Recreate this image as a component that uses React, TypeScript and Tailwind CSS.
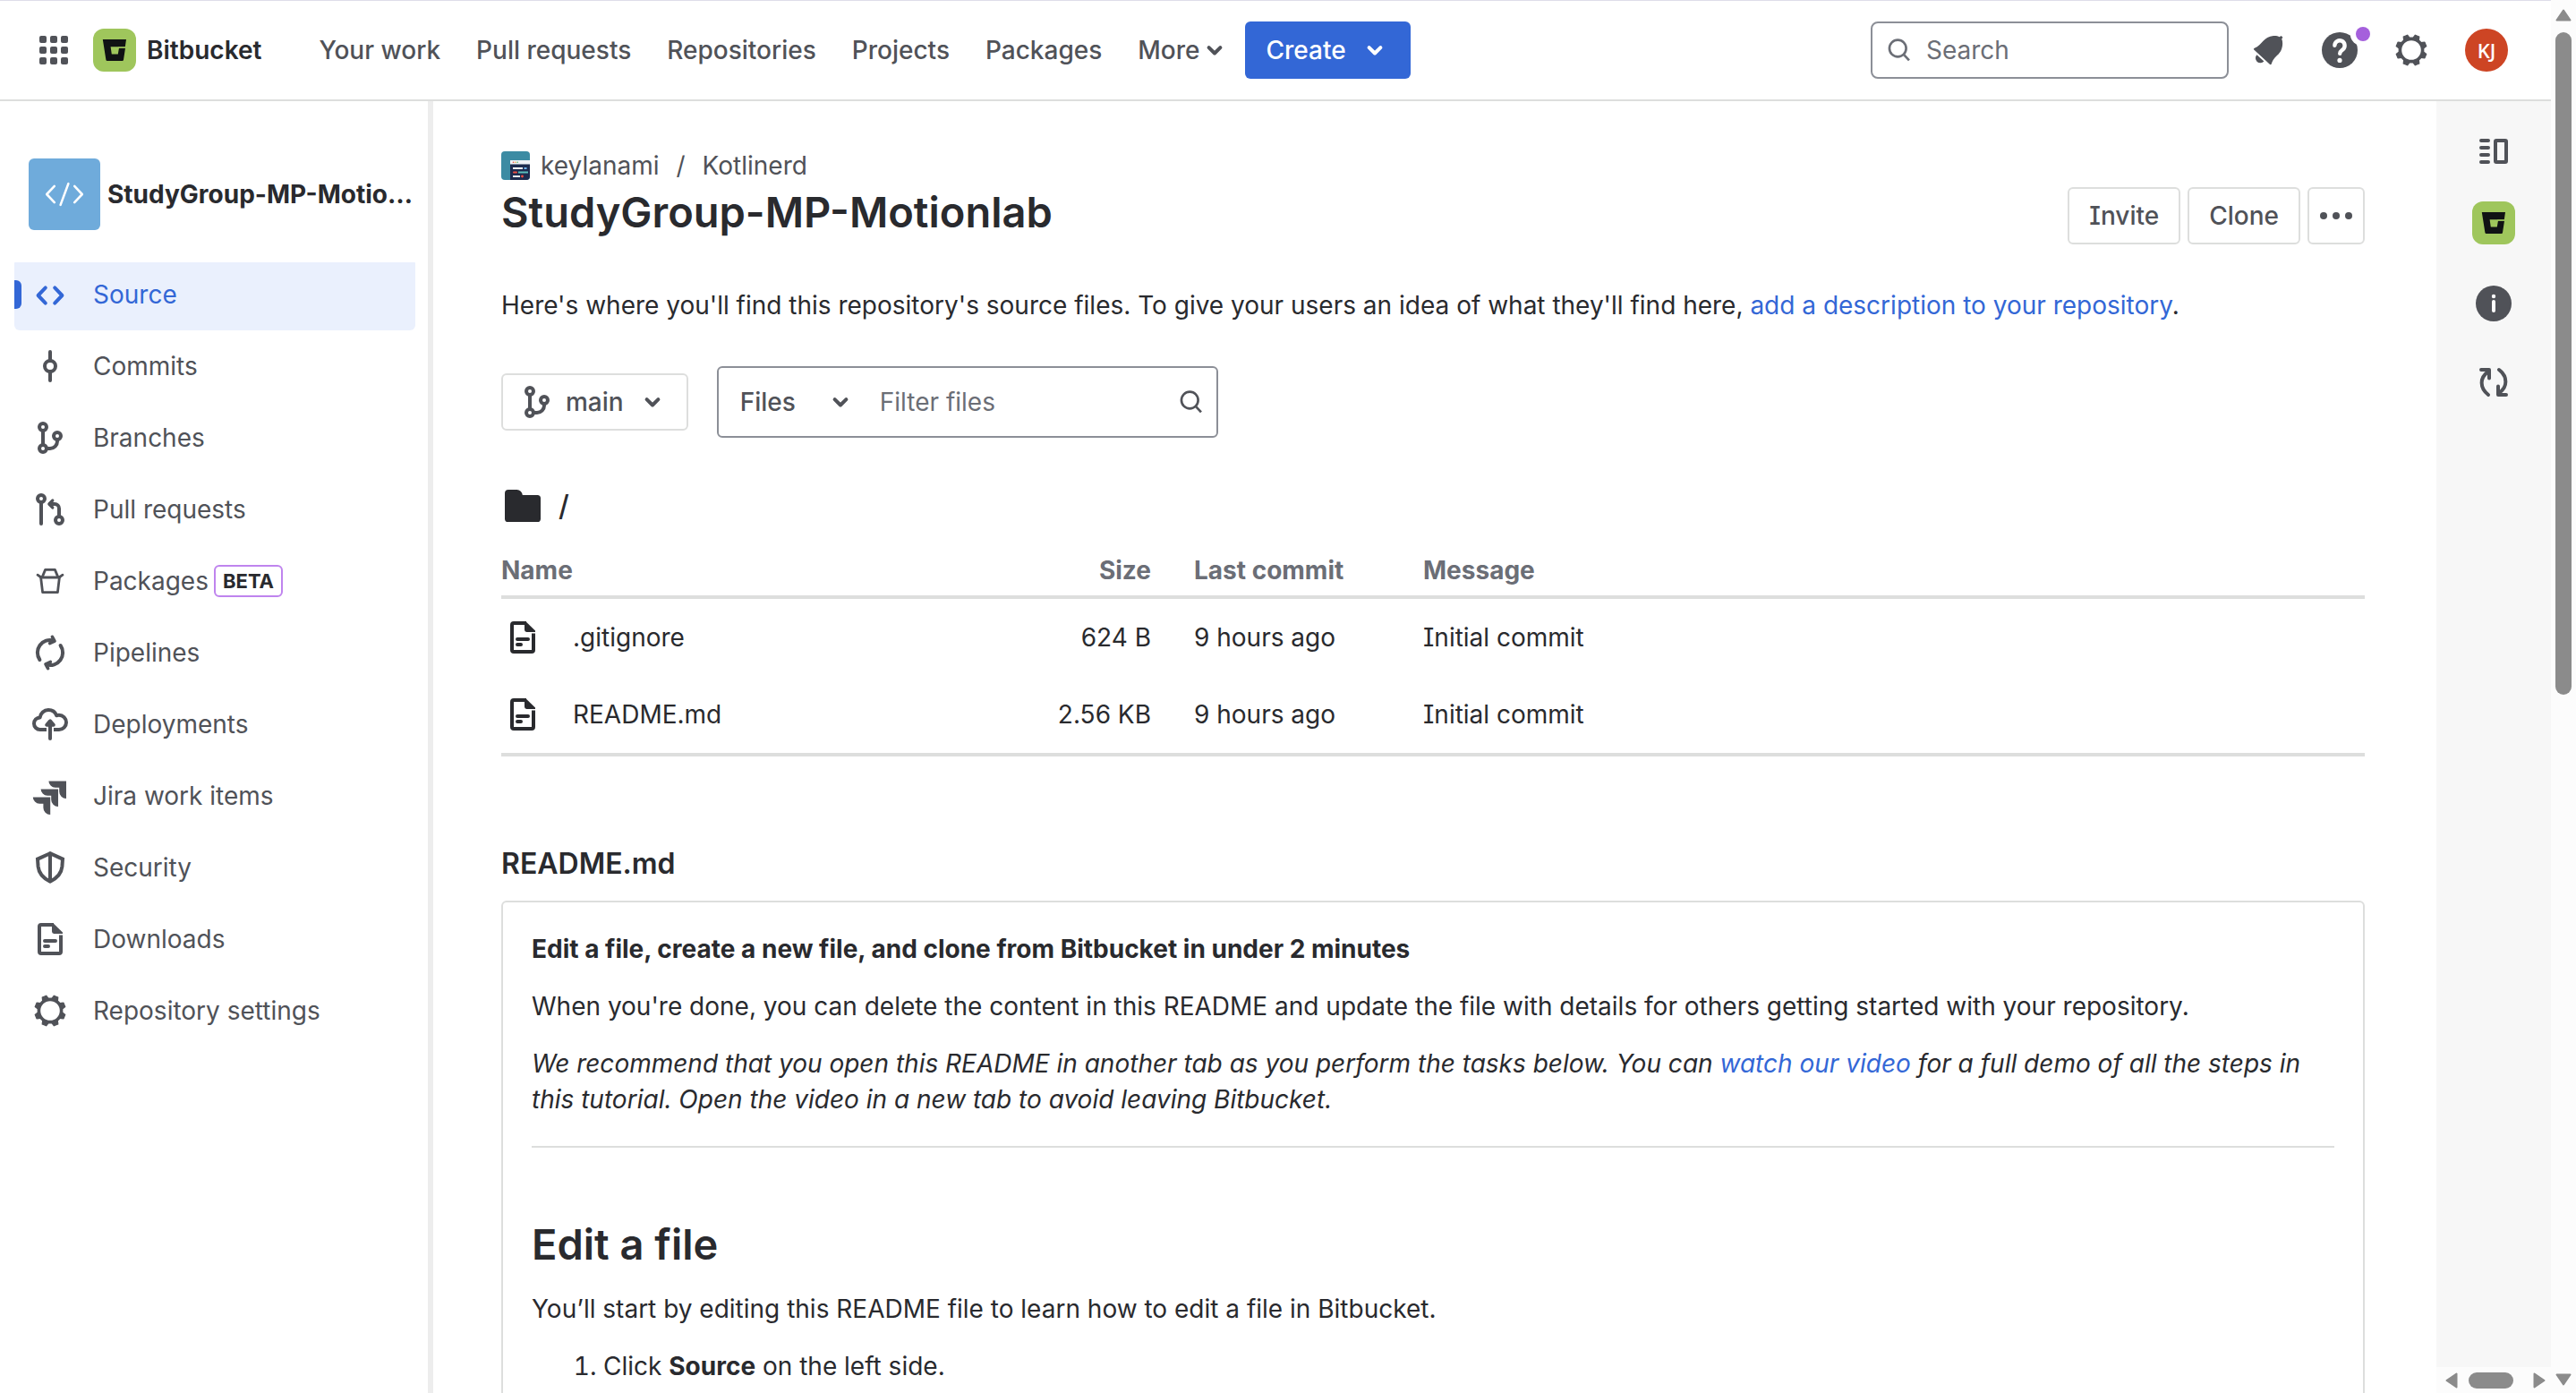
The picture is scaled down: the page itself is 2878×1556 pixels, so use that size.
import React from "react";

type IconProps = { className?: string; children?: React.ReactNode };

function Icon({ className = "size-12", children }: IconProps) {
  return (
    <svg
      viewBox="0 0 24 24"
      className={`shrink-0 ${className}`}
      fill="none"
      stroke="currentColor"
      strokeWidth={2}
      strokeLinecap="round"
      strokeLinejoin="round"
      aria-hidden="true"
    >
      {children}
    </svg>
  );
}

const CodeIcon = () => (
  <Icon>
    <path d="M9.4 8.2 5.3 12.5l4.1 4.3M14.6 8.2l4.1 4.3-4.1 4.3" />
  </Icon>
);
const CommitIcon = () => (
  <Icon>
    <circle cx="12" cy="12" r="3" />
    <path d="M12 4v5M12 15v5" />
  </Icon>
);
const BranchIcon = () => (
  <Icon>
    <circle cx="8" cy="6" r="2" />
    <circle cx="8" cy="18" r="2" />
    <circle cx="16" cy="11" r="2" />
    <path d="M8 8v8M16 13v1a4 4 0 0 1-4 4h-2" />
  </Icon>
);
const PullRequestIcon = () => (
  <Icon>
    <circle cx="7" cy="6" r="2" />
    <circle cx="17" cy="18" r="2" />
    <path d="M7 8v12M17 16v-4.5A2.5 2.5 0 0 0 14.5 9H12" />
    <path d="M13.4 7 11.4 9l2 2" strokeWidth={1.6} />
  </Icon>
);
const BucketIcon = () => (
  <Icon>
    <g strokeWidth={1.4}>
      <path d="M5 8.6 7 10h10l2-1.4" />
      <path d="M7.6 9.8 9.3 5.7h5.4l1.7 4.1" />
      <path d="m6.8 10 1 8.3h8.4l1-8.3" />
    </g>
  </Icon>
);
const PipelinesIcon = () => (
  <Icon>
    <path d="M6.2 16A7 7 0 0 1 14 5.3" />
    <path d="M13.2 3.2 14.5 5.6 11.8 6.8" strokeWidth={1.8} />
    <path d="M17.8 8A7 7 0 0 1 10 18.7" />
    <path d="M10.8 20.8 9.5 18.4 12.2 17.2" strokeWidth={1.8} />
  </Icon>
);
const DeployIcon = () => (
  <Icon>
    <path
      strokeLinecap="butt"
      d="M10 15H6.4A3.4 3.4 0 0 1 3 11.6a3.4 3.4 0 0 1 3.3-3.4C6.6 5.8 8.6 4 11 4c2.1 0 3.9 1.3 4.6 3.1.4-.1.9-.2 1.3-.2A4.1 4.1 0 0 1 21 11a4 4 0 0 1-4 4h-3"
    />
    <path d="M12 11v9" />
    <path d="M12 10.2 10.1 12.4h3.8z" fill="currentColor" />
  </Icon>
);
const JiraIcon = () => (
  <Icon>
    <g fill="currentColor" stroke="none">
      <path d="M11.2 3.7H21v9.8a3.9 3.9 0 0 1-3.9-3.9V7.4h-2.2a3.8 3.8 0 0 1-3.7-3.7z" />
      <path d="M6.8 8.2h9.7V18a3.9 3.9 0 0 1-3.9-3.9v-2.2h-2.1a3.8 3.8 0 0 1-3.7-3.7z" />
      <path d="M2.4 12.7h9.7v9.8a3.9 3.9 0 0 1-3.9-3.9v-2.2H6.1a3.8 3.8 0 0 1-3.7-3.7z" />
    </g>
  </Icon>
);
const ShieldIcon = () => (
  <Icon>
    <path
      strokeLinejoin="miter"
      d="M12 4.1 5 7.3l.3 4.2c.4 3.7 2.2 6.2 6.7 8.3 4.5-2.1 6.3-4.6 6.7-8.3L19 7.3zM12 4v15.8"
    />
  </Icon>
);
const FileIcon = () => (
  <Icon>
    <path
      strokeLinecap="butt"
      d="M14 4H7a1 1 0 0 0-1 1v14a1 1 0 0 0 1 1h10a1 1 0 0 0 1-1V9.8"
    />
    <path
      d="M13 3h.6L19 8.2V9h-4.8A1.2 1.2 0 0 1 13 7.8z"
      fill="currentColor"
      stroke="none"
    />
    <path d="M9 13h6M9 16h2" />
  </Icon>
);
const GearIcon = () => (
  <Icon>
    <circle cx="12" cy="12" r="6.3" strokeWidth={1.8} />
    {[22.5, 67.5, 112.5, 157.5, 202.5, 247.5, 292.5, 337.5].map((a) => (
      <path
        key={a}
        d="M10.2 5.5 10.8 3.4h2.4l.6 2.1z"
        fill="currentColor"
        strokeWidth={0.6}
        transform={`rotate(${a} 12 12)`}
      />
    ))}
  </Icon>
);
const FolderIcon = () => (
  <Icon>
    <path
      fill="currentColor"
      stroke="none"
      d="M4 3h4.6a3.2 3.2 0 0 1 3.3 3h8.3A1.8 1.8 0 0 1 22 7.8v11.4a1.8 1.8 0 0 1-1.8 1.8H3.8A1.8 1.8 0 0 1 2 19.2V5a2 2 0 0 1 2-2z"
    />
  </Icon>
);
const ChevronIcon = () => (
  <Icon className="size-8">
    <path strokeWidth={3} d="m7.2 9.8 4.8 4.8 4.8-4.8" />
  </Icon>
);
const SearchIcon = () => (
  <Icon className="size-8">
    <circle cx="10.7" cy="10.5" r="7" />
    <path d="m16 16 4.2 4.5" strokeLinecap="butt" />
  </Icon>
);
const GridIcon = () => (
  <Icon className="size-8">
    <g fill="currentColor" stroke="none">
      {[0, 9, 18].map((y) =>
        [0, 9, 18].map((x) => (
          <rect key={`${x}-${y}`} x={x} y={y} width="6" height="6" rx="1.5" />
        )),
      )}
    </g>
  </Icon>
);
const BellIcon = () => (
  <Icon>
    <g fill="currentColor" stroke="none">
      <path d="M4.4 10.9C8.8 9.2 9.5 4.3 15 4c1.3-.1 2.5.1 3.4.6l.9-.6.9.9-.6.9c.5 1 .6 2.5.3 4.2-.9 5-4.6 5-6 9.6-.1.5-.6.6-1 .3l-8.800-8.100c-.3-.3-.2-.7.3-.9z" />
      <path d="m5.7 14.6 4 3.7a2.7 2.7 0 0 1-4-3.7z" />
    </g>
  </Icon>
);
const HelpIcon = () => (
  <Icon>
    <circle cx="12" cy="12" r="10" fill="currentColor" stroke="none" />
    <circle cx="24.5" cy="3" r="6.6" fill="white" stroke="none" />
    <path
      stroke="white"
      strokeWidth={2.2}
      d="M9.2 9.4a2.8 2.8 0 1 1 4.6 2.2c-1 .8-1.7 1.2-1.7 2.3"
    />
    <circle cx="12" cy="17.7" r="1.3" fill="white" stroke="none" />
  </Icon>
);
const InfoIcon = () => (
  <Icon>
    <circle cx="12" cy="12" r="10" fill="currentColor" stroke="none" />
    <circle cx="12" cy="8" r="1.1" fill="white" stroke="none" />
    <path stroke="white" d="M12 11v5" />
  </Icon>
);
const PanelIcon = () => (
  <Icon>
    <path d="M5 6h4M5 10h4M5 14h4M5 18h4" />
    <rect x="13" y="6" width="6" height="12" rx=".5" />
  </Icon>
);
const SyncIcon = () => (
  <Icon>
    <path d="M9 19C4.2 15.3 4 9.5 9 6M5 5h4.5v4.8" />
    <path d="M15 5c4.8 3.7 5 9.5 0 13M19 19h-4.5v-4.8" />
  </Icon>
);
const DotsIcon = () => (
  <Icon>
    <g fill="currentColor" stroke="none">
      <circle cx="5" cy="12" r="2" />
      <circle cx="12" cy="12" r="2" />
      <circle cx="19" cy="12" r="2" />
    </g>
  </Icon>
);
const BitbucketLogo = () => (
  <svg viewBox="0 0 24 24" className="size-12 shrink-0" aria-hidden="true">
    <rect width="24" height="24" rx="6" fill="#9fc65c" />
    <path
      fill="#101214"
      d="M5.4 6h13.1l-.6 4.3h-3.8l-.1.6h4l-1 6.5a.7.7 0 0 1-.7.6H7.9a.7.7 0 0 1-.7-.6z"
    />
    <path fill="#9fc65c" d="M9.8 10.1h8.4l-.1.700h-3.600l-.6 3.400h-3.500z" />
  </svg>
);

const navLinks = ["Your work", "Pull requests", "Repositories", "Projects", "Packages"];

function Header() {
  return (
    <header className="flex h-[113px] shrink-0 items-center border-t border-b-2 border-t-[#dedde9] border-b-[#dddedd] pr-12 pl-11 text-[#505258]">
      <button type="button" aria-label="Switch to" className="mr-7">
        <GridIcon />
      </button>
      <a href="#home" className="mr-16 flex items-center gap-3 font-semibold text-[#292a2e]">
        <BitbucketLogo />
        Bitbucket
      </a>
      <nav className="flex items-center gap-10 font-medium">
        {navLinks.map((label) => (
          <a key={label} href="#nav">
            {label}
          </a>
        ))}
        <button type="button" className="flex items-center">
          More
          <ChevronIcon />
        </button>
      </nav>
      <button
        type="button"
        className="ml-[18px] flex h-16 items-center gap-4 rounded-md bg-[#3367d6] px-6 font-medium text-white"
      >
        Create
        <ChevronIcon />
      </button>
      <label className="ml-auto flex h-16 w-[400px] items-center gap-3.5 rounded-lg border-2 border-[#8c8f97] px-3.5 text-[#6b6e76]">
        <SearchIcon />
        <input
          type="search"
          aria-label="Search"
          placeholder="Search"
          className="w-full min-w-0 bg-transparent outline-none placeholder:text-[#6b6e76]"
        />
      </label>
      <div className="ml-5 flex items-center gap-8">
        <button type="button" aria-label="Announcements">
          <BellIcon />
        </button>
        <button type="button" aria-label="Help" className="relative">
          <HelpIcon />
          <span className="absolute -top-0.5 left-[42px] size-4 rounded-full bg-[#a560dc]" />
        </button>
        <button type="button" aria-label="Settings">
          <GearIcon />
        </button>
      </div>
      <button
        type="button"
        aria-label="Your profile"
        className="ml-9 size-12 shrink-0 rounded-full bg-[#cd4524] font-['Open_Sans',sans-serif] text-[22px] font-semibold text-white"
      >
        KJ
      </button>
    </header>
  );
}

const sideItems: { label: string; icon: React.ReactNode; beta?: boolean }[] = [
  { label: "Source", icon: <CodeIcon /> },
  { label: "Commits", icon: <CommitIcon /> },
  { label: "Branches", icon: <BranchIcon /> },
  { label: "Pull requests", icon: <PullRequestIcon /> },
  { label: "Packages", icon: <BucketIcon />, beta: true },
  { label: "Pipelines", icon: <PipelinesIcon /> },
  { label: "Deployments", icon: <DeployIcon /> },
  { label: "Jira work items", icon: <JiraIcon /> },
  { label: "Security", icon: <ShieldIcon /> },
  { label: "Downloads", icon: <FileIcon /> },
  { label: "Repository settings", icon: <GearIcon /> },
];

function Sidebar() {
  return (
    <aside className="w-[484px] shrink-0 border-r-[6px] border-[#ededed] pt-16 text-[#505258]">
      <div className="flex items-center gap-2 pr-4 pl-8 font-[653] text-[#292a2e]">
        <span className="flex size-20 shrink-0 items-center justify-center rounded-md bg-[#6fabdb] text-white">
          <Icon className="size-11">
            <path
              strokeWidth={1.4}
              d="M5.9 7 1.2 12l4.7 5M18.1 7l4.7 5-4.7 5M14.4 5.5l-4.8 13"
            />
          </Icon>
        </span>
        <span className="truncate">StudyGroup-MP-Motionlab</span>
      </div>
      <nav className="mt-9 overflow-hidden pr-3.5 pl-4">
        <ul className="-mt-1">
          {sideItems.map((item, i) => (
            <li key={item.label}>
              <a
                href="#section"
                aria-current={i === 0 ? "page" : undefined}
                className="relative flex h-20 items-center gap-6 overflow-hidden rounded-md pl-4 aria-[current=page]:bg-[#eaf0fd] aria-[current=page]:text-[#3367d6]"
              >
                {i === 0 && (
                  <span className="absolute top-6 left-0 h-8 w-2 rounded-r-md bg-[#3367d6]" />
                )}
                {item.icon}
                <span className="flex items-center gap-1.5">
                  {item.label}
                  {item.beta && (
                    <span className="rounded-md border-2 border-[#bf84ee] px-2 text-[22px] leading-8 font-[653] text-[#292a2e]">
                      BETA
                    </span>
                  )}
                </span>
              </a>
            </li>
          ))}
        </ul>
      </nav>
    </aside>
  );
}

function WorkspaceAvatar() {
  return (
    <svg viewBox="0 0 32 32" className="size-8 shrink-0 rounded" aria-hidden="true">
      <rect width="32" height="32" fill="#3c8ba3" />
      <rect x="10" y="10" width="22" height="22" fill="#1d2b4f" />
      <rect x="10" y="10" width="22" height="4.5" fill="#eef1f6" />
      <circle cx="13.5" cy="12.3" r=".8" fill="#e5483a" />
      <circle cx="15.8" cy="12.3" r=".8" fill="#f0a030" />
      <circle cx="18.1" cy="12.3" r=".8" fill="#4bae5f" />
      <rect x="13" y="18" width="11" height="2" fill="#fff" />
      <rect x="25.5" y="18" width="3" height="2" fill="#6fb3f2" />
      <rect x="13" y="22.5" width="5" height="2" rx="1" fill="#ef4f43" />
      <rect x="19" y="22.5" width="11" height="2" fill="#5cc0bd" />
      <rect x="13" y="27" width="8" height="2" fill="#e8ecf4" />
      <circle cx="23.5" cy="28" r="1.4" fill="#ef4f43" />
    </svg>
  );
}

const files = [
  { name: ".gitignore", size: "624 B" },
  { name: "README.md", size: "2.56 KB" },
];

const outlineButton =
  "flex h-16 items-center justify-center rounded-md border-2 border-[#dddedd] font-medium text-[#505258]";

function Main() {
  return (
    <main className="min-w-0 flex-1 pt-[52px] pr-20 pl-[76px]">
      <div className="flex items-end justify-between">
        <div>
          <div className="flex h-10 items-center text-[#505258]">
            <WorkspaceAvatar />
            <a href="#workspace" className="ml-3">
              keylanami
            </a>
            <span className="mx-[19px]">/</span>
            <a href="#project">Kotlinerd</a>
          </div>
          <h1 className="mt-1 mb-2 text-[47px] leading-14 font-semibold">
            StudyGroup-MP-Motionlab
          </h1>
        </div>
        <div className="flex gap-2">
          <button type="button" className={`${outlineButton} px-[22px]`}>
            Invite
          </button>
          <button type="button" className={`${outlineButton} px-[22px]`}>
            Clone
          </button>
          <button type="button" aria-label="More actions" className={`${outlineButton} w-16`}>
            <DotsIcon />
          </button>
        </div>
      </div>

      <p className="mt-12">
        Here's where you'll find this repository's source files. To give your users an idea of what
        they'll find here,{" "}
        <a href="#description" className="text-[#3367d6]">
          add a description to your repository
        </a>
        .
      </p>

      <div className="mt-12 flex items-center gap-8">
        <button type="button" className={`${outlineButton} pr-5.5 pl-3.5`}>
          <BranchIcon />
          <span className="mr-4 ml-2">main</span>
          <ChevronIcon />
        </button>
        <div className="flex h-20 w-[560px] items-center rounded-md border-2 border-[#8c8f97] pr-3 pl-6 text-[#505258]">
          <button type="button" className="flex items-center gap-[34px] font-medium">
            Files
            <ChevronIcon />
          </button>
          <input
            type="text"
            aria-label="Filter files"
            placeholder="Filter files"
            className="ml-7 min-w-0 flex-1 bg-transparent outline-none placeholder:text-[#6b6e76]"
          />
          <SearchIcon />
        </div>
      </div>

      <div className="mt-[52px] flex h-12 items-center gap-4 text-[32px] font-medium">
        <FolderIcon />/
      </div>

      <table className="mt-3 w-full table-fixed border-separate border-spacing-0 border-b-4 border-[#dddedd] text-left">
        <thead>
          <tr className="h-[68px] text-[#6b6e76]">
            <th className="border-b-4 border-[#dddedd] pt-2 font-[653]">Name</th>
            <th className="w-[120px] border-b-4 border-[#dddedd] pt-2 text-right font-[653]">
              Size
            </th>
            <th className="w-[304px] border-b-4 border-[#dddedd] pt-2 pl-12 font-[653]">
              Last commit
            </th>
            <th className="w-[1052px] border-b-4 border-[#dddedd] pt-2 font-[653]">Message</th>
          </tr>
        </thead>
        <tbody>
          {files.map((f) => (
            <tr key={f.name} className="h-[86px]">
              <td>
                <a href="#file" className="flex items-center gap-8">
                  <FileIcon />
                  {f.name}
                </a>
              </td>
              <td className="text-right">{f.size}</td>
              <td className="pl-12">9 hours ago</td>
              <td>Initial commit</td>
            </tr>
          ))}
        </tbody>
      </table>

      <h2 className="mt-[100px] text-[32px] leading-10 font-semibold">README.md</h2>
      <article className="mt-[21px] rounded-md border-2 border-[#dddedd] px-8 pt-8 pb-12">
        <h4 className="font-[653]">
          Edit a file, create a new file, and clone from Bitbucket in under 2 minutes
        </h4>
        <p className="mt-6">
          When you're done, you can delete the content in this README and update the file with
          details for others getting started with your repository.
        </p>
        <p className="mt-6 italic">
          We recommend that you open this README in another tab as you perform the tasks below. You
          can{" "}
          <a href="#video" className="text-[#3367d6]">
            watch our video
          </a>{" "}
          for a full demo of all the steps in this tutorial. Open the video in a new tab to avoid
          leaving Bitbucket.
        </p>
        <hr className="mt-8 border-t-2 border-[#dddedd]" />
        <h2 className="mt-20 text-[47px] leading-14 font-semibold">Edit a file</h2>
        <p className="mt-6">
          You’ll start by editing this README file to learn how to edit a file in Bitbucket.
        </p>
        <ol className="mt-6 list-decimal pl-20">
          <li>
            Click <strong className="font-bold">Source</strong> on the left side.
          </li>
        </ol>
      </article>
    </main>
  );
}

function RightRail() {
  return (
    <aside className="flex w-32 shrink-0 flex-col bg-[#f7f7f7] text-[#505258]">
      <div className="flex flex-1 flex-col items-center pt-8">
        <button type="button" aria-label="Toggle panel">
          <PanelIcon />
        </button>
        <button type="button" aria-label="Bitbucket" className="my-8">
          <BitbucketLogo />
        </button>
        <button type="button" aria-label="Details" className="mt-2.5 mb-10">
          <InfoIcon />
        </button>
        <button type="button" aria-label="Refresh">
          <SyncIcon />
        </button>
      </div>
      <div className="flex h-[29px] items-center bg-[#fcfcfc] pr-1 pl-2">
        <Arrow className="-rotate-90" />
        <span className="mr-auto ml-2.5 h-[18px] w-[50px] rounded-full bg-[#8b8b8b]" />
        <Arrow className="rotate-90" />
      </div>
    </aside>
  );
}

function Arrow({ className = "" }: { className?: string }) {
  return (
    <svg
      viewBox="0 0 18 14"
      className={`h-3.5 w-[18px] text-[#8b8b8b] ${className}`}
      aria-hidden="true"
    >
      <path
        d="M9 1.5 16.5 12.5h-15z"
        fill="currentColor"
        stroke="currentColor"
        strokeWidth={2}
        strokeLinejoin="round"
      />
    </svg>
  );
}

export default function App() {
  return (
    <div className="flex h-screen overflow-hidden bg-white font-['Inter',sans-serif] text-[28px] leading-10 text-[#292a2e] [font-feature-settings:'cv08']">
      <div className="flex min-w-0 flex-1 flex-col">
        <Header />
        <div className="flex min-h-0 flex-1">
          <Sidebar />
          <Main />
          <RightRail />
        </div>
      </div>
      <div className="flex w-7 shrink-0 flex-col items-center bg-[#fcfcfc] pt-2.5 pb-2">
        <Arrow />
        <span className="mt-3 h-[740px] w-[18px] rounded-full bg-[#8b8b8b]" />
        <Arrow className="mt-auto rotate-180" />
      </div>
    </div>
  );
}
